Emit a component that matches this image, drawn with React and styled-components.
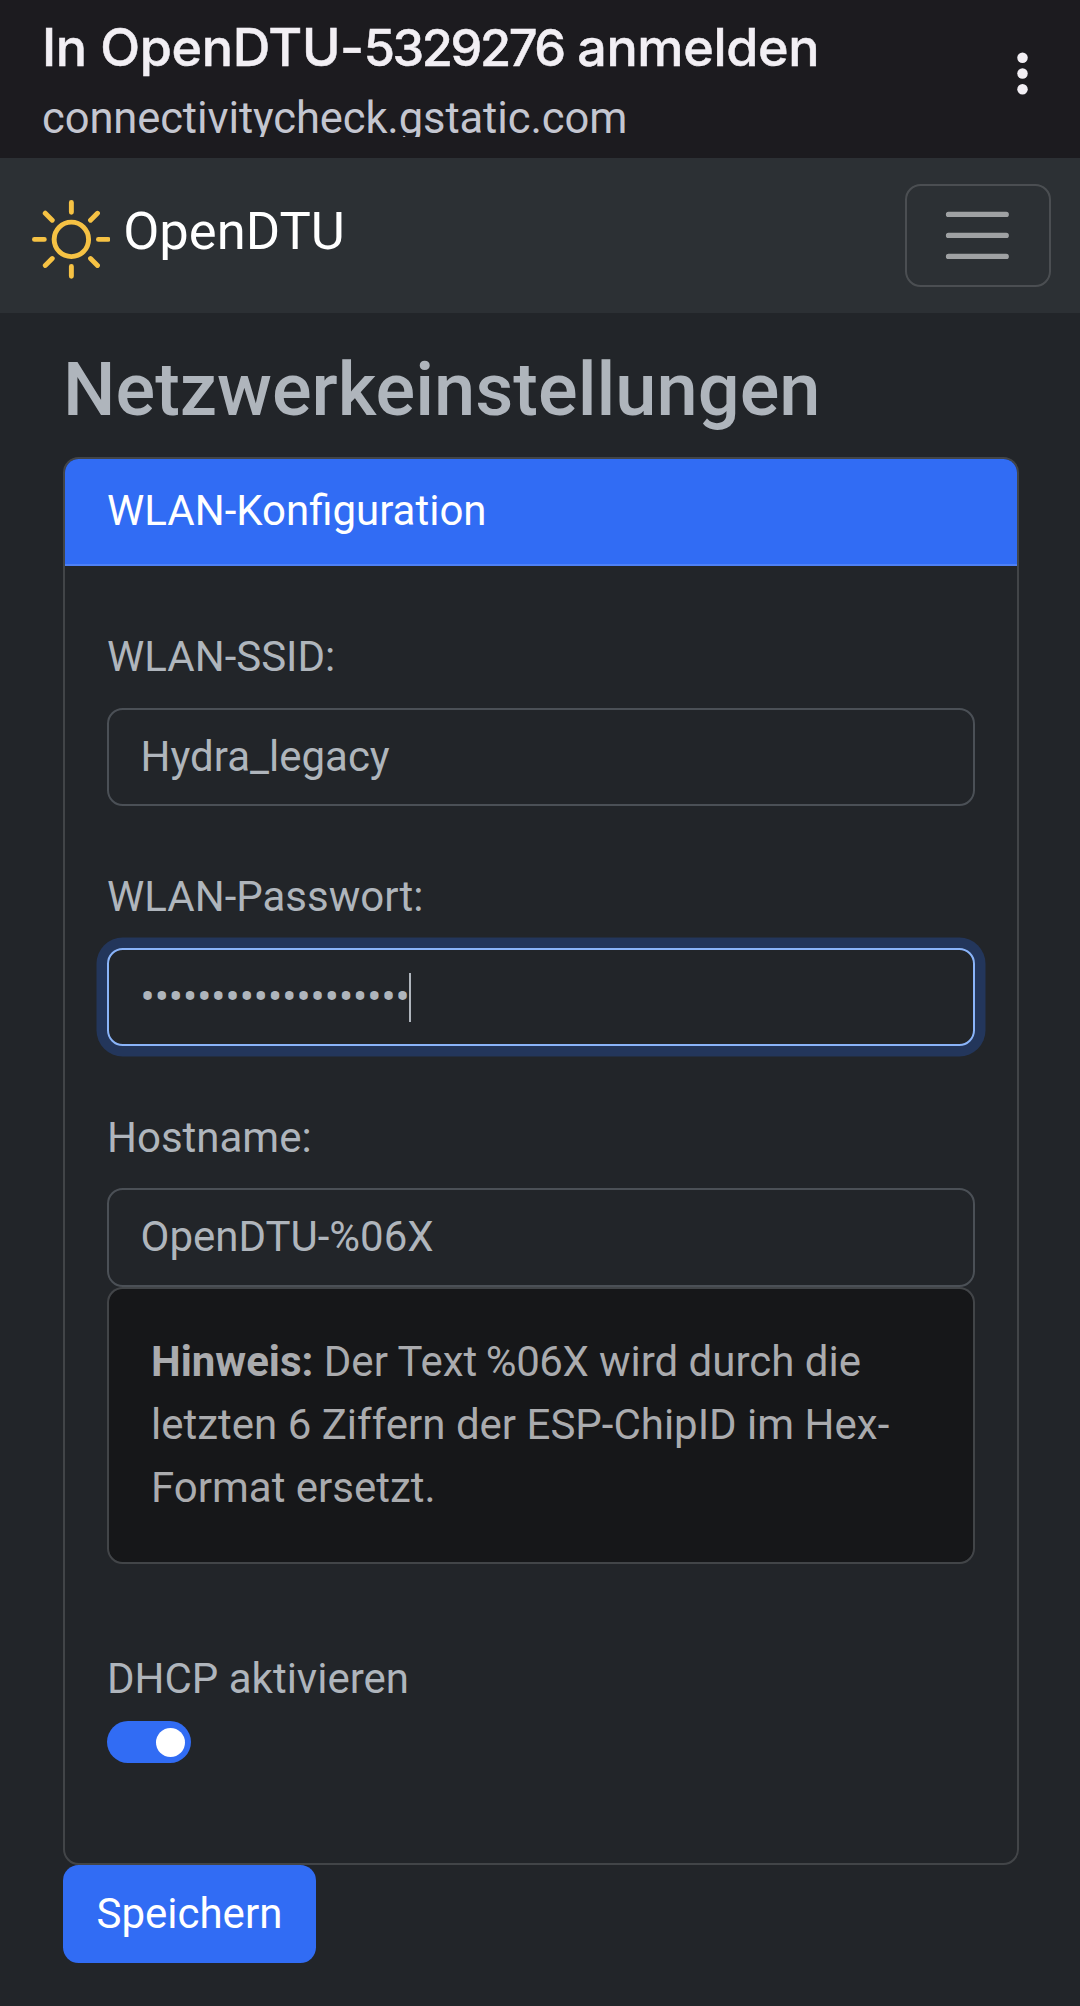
import React from 'react';
import styled, { createGlobalStyle, css } from 'styled-components';
import { BsSun } from 'react-icons/bs';

const GlobalStyle = createGlobalStyle`
  *, *::before, *::after { box-sizing: border-box; }
  html, body { margin: 0; padding: 0; background: #222529; }
  body {
    overflow: hidden;
    font-family: Roboto, "Liberation Sans", sans-serif;
    font-size: 42px;
    line-height: 63px;
    color: #afb5bc;
  }
`;

const Page = styled.div`
  width: 1081.5px;
  height: 2006px;
  overflow: hidden;
  background: #222529;
`;

const PortalBar = styled.header`
  display: flex;
  justify-content: space-between;
  height: 158px;
  padding: 18px 28px 0 42px;
  background: #1c1b1f;
`;

const PortalTitle = styled.div`
  font-family: Inter, Roboto, sans-serif;
  font-size: 52px;
  font-weight: 500;
  line-height: 60px;
  letter-spacing: -0.35px;
  white-space: nowrap;
  color: #f2eff4;
  -webkit-text-stroke: 0.5px #f2eff4;
`;

const Serial = styled.span`
  font-size: 50.5px;
  letter-spacing: -2.4px;
`;

const PortalHost = styled.div`
  height: 43px;
  margin-top: 16px;
  overflow: hidden;
  font-size: 43.5px;
  line-height: 50px;
  letter-spacing: -0.1px;
  white-space: nowrap;
  color: #c4c6d0;
`;

const MoreIcon = styled.svg`
  width: 63px;
  height: 63px;
  margin-top: 24px;
  fill: #f2eff4;
`;

const Navbar = styled.nav`
  display: flex;
  align-items: center;
  justify-content: space-between;
  height: 155px;
  padding: 0 30.5px 0 31.5px;
  background: #2c3034;
`;

const Brand = styled.a`
  display: flex;
  align-items: flex-start;
  gap: 13px;
  height: 79px;
  font-size: 52.5px;
  line-height: 79px;
  color: #fff;
`;

const BrandIcon = styled(BsSun)`
  width: 78.75px;
  height: 78.75px;
  margin-top: 4px;
  color: #f6c244;
`;

const BrandName = styled.span`
  margin-top: -4px;
`;

const Toggler = styled.button`
  display: flex;
  padding: 10.5px 32px 10.5px 31px;
  border: 2px solid rgba(255, 255, 255, 0.15);
  border-radius: 15.75px;
  background: transparent;

  svg {
    width: 78.75px;
    height: 78.75px;
  }
`;

const Container = styled.main`
  padding: 32px 63px 0;
`;

const Heading = styled.h1`
  margin: 0 0 23px;
  font-size: 74px;
  font-weight: 500;
  line-height: 89px;
`;

const Card = styled.section`
  border: 2px solid rgba(255, 255, 255, 0.15);
  border-radius: 15.75px;
  overflow: hidden;
`;

const CardHeader = styled.div`
  padding: 20px 42px 22px;
  border-bottom: 2px solid rgba(255, 255, 255, 0.15);
  background: #316cf4;
  color: #fff;
`;

const CardBody = styled.div`
  height: 1297px;
  padding: 42px;
`;

const Field = styled.div`
  margin-bottom: 42px;
`;

const Label = styled.label`
  display: block;
  height: 100px;
  padding-top: 17.25px;
`;

const control = css`
  display: flex;
  align-items: center;
  width: 100%;
  height: 98.2px;
  padding: 0 31.5px 2.2px;
  border: 2px solid ${(p) => (p.$focused ? '#8ab4f9' : '#4b5056')};
  border-radius: 15.75px;
  outline: 0;
  background: #222529;
  box-shadow: ${(p) => (p.$focused ? '0 0 0 10.5px rgba(39, 108, 244, 0.25)' : 'none')};
  color: #afb5bc;
  font: inherit;
`;

const TextInput = styled.input`
  ${control}
`;

const PasswordBox = styled.div`
  ${control}
`;

const Caret = styled.span`
  width: 2px;
  height: 49px;
  margin: 2px 0 0 -1px;
  background: #afb5bc;
`;

const Hint = styled.div`
  padding: 41px 42px 43px;
  border: 2px solid rgba(255, 255, 255, 0.15);
  border-radius: 15.75px;
  background: #161719;
  background-clip: padding-box;
  color: #aaabae;
`;

const Placeholder = styled.span`
  margin-left: -2px;
  letter-spacing: -0.4px;
`;

const SwitchRow = styled.div`
  display: flex;
  flex-direction: column;
  gap: 11.5px;
  padding-top: 41px;
`;

const Switch = styled.div`
  display: flex;
  justify-content: flex-end;
  align-items: center;
  width: 84px;
  height: 42px;
  padding-right: 6.5px;
  border-radius: 42px;
  background: #316cf4;
`;

const Knob = styled.span`
  width: 29px;
  height: 29px;
  border-radius: 50%;
  background: #fff;
`;

const SaveButton = styled.button`
  display: block;
  height: 98px;
  padding: 0 33.5px 2px;
  border: 0;
  border-radius: 15.75px;
  background: #316cf4;
  color: #fff;
  font: inherit;
`;

export default function App() {
  return (
    <Page>
      <GlobalStyle />
      <PortalBar>
        <div>
          <PortalTitle>
            In OpenDTU-<Serial>5329276</Serial> anmelden
          </PortalTitle>
          <PortalHost>connectivitycheck.gstatic.com</PortalHost>
        </div>
        <MoreIcon viewBox="0 0 24 24">
          <circle cx="12" cy="6" r="2" />
          <circle cx="12" cy="12" r="2" />
          <circle cx="12" cy="18" r="2" />
        </MoreIcon>
      </PortalBar>
      <Navbar>
        <Brand>
          <BrandIcon />
          <BrandName>OpenDTU</BrandName>
        </Brand>
        <Toggler aria-label="Menü">
          <svg viewBox="0 0 30 30">
            <path
              d="M4 7h22M4 15h22M4 23h22"
              stroke="rgba(255,255,255,0.55)"
              strokeWidth="2"
              strokeLinecap="round"
            />
          </svg>
        </Toggler>
      </Navbar>
      <Container>
        <Heading>Netzwerkeinstellungen</Heading>
        <Card>
          <CardHeader>WLAN-Konfiguration</CardHeader>
          <CardBody>
            <Field>
              <Label>WLAN-SSID:</Label>
              <TextInput defaultValue="Hydra_legacy" />
            </Field>
            <Field>
              <Label>WLAN-Passwort:</Label>
              <PasswordBox $focused>
                {'•'.repeat(19)}
                <Caret />
              </PasswordBox>
            </Field>
            <Field>
              <Label>Hostname:</Label>
              <TextInput defaultValue="OpenDTU-%06X" />
              <Hint>
                <b>Hinweis:</b> Der Text <Placeholder>%06X</Placeholder> wird durch die letzten 6
                Ziffern der ESP-ChipID im Hex-Format ersetzt.
              </Hint>
            </Field>
            <SwitchRow>
              <span>DHCP aktivieren</span>
              <Switch role="switch" aria-checked="true">
                <Knob />
              </Switch>
            </SwitchRow>
          </CardBody>
        </Card>
        <SaveButton>Speichern</SaveButton>
      </Container>
    </Page>
  );
}
